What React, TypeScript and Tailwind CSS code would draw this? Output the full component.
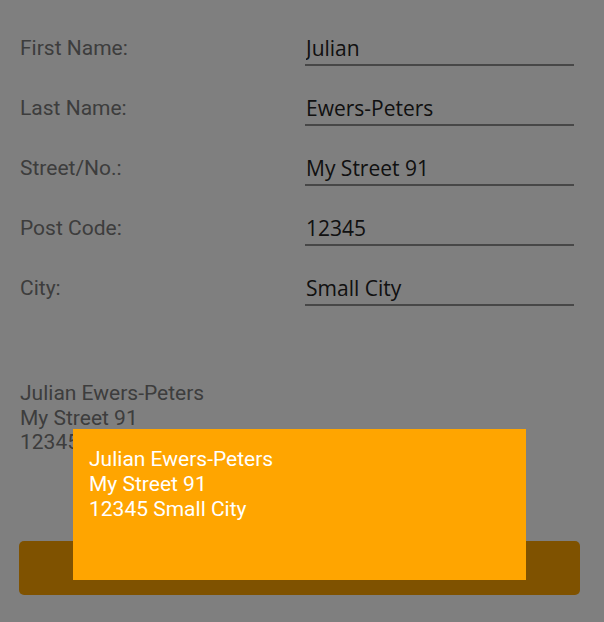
import React from "react";

const fields = [
  { label: "First Name:", value: "Julian" },
  { label: "Last Name:", value: "Ewers-Peters" },
  { label: "Street/No.:", value: "My Street 91" },
  { label: "Post Code:", value: "12345" },
  { label: "City:", value: "Small City" },
];

export default function App() {
  return (
    <div className="relative w-[604px] h-[622px] overflow-hidden bg-white font-['Roboto',sans-serif]">
      {/* Form */}
      <div className="flex flex-col gap-[20px] pt-[26px] pl-[20px] pr-[30px]">
        {fields.map((f) => (
          <div key={f.label} className="grid grid-cols-[285px_1fr] items-center h-[40px]">
            <span className="pt-[6px] text-[21px] text-[#7a7a7a]">{f.label}</span>
            <input
              readOnly
              value={f.value}
              className="h-[40px] w-full border-b-[2px] border-[#8e8e8e] bg-transparent pt-[5px] pl-[1px] text-[21px] text-[#222] outline-none font-['Open_Sans',sans-serif]"
            />
          </div>
        ))}
      </div>

      {/* Address preview */}
      <div className="mt-[75px] pl-[20px] text-[21px] leading-[24.5px] text-[#7a7a7a]">
        <div>Julian Ewers-Peters</div>
        <div>My Street 91</div>
        <div>12345 Small City</div>
      </div>

      <div className="pl-[19px] pr-[24px] mt-[86px]">
        <button className="h-[54px] w-full rounded-[5px] bg-[#ffa500]" />
      </div>

      {/* Overlay */}
      <div className="absolute inset-0 bg-black/50" />

      {/* Popup */}
      <div className="absolute left-[73px] top-[429px] w-[453px] h-[151px] bg-[#ffa500] px-[16px] pt-[18px] text-[21px] leading-[25px] text-white">
        <div>Julian Ewers-Peters</div>
        <div>My Street 91</div>
        <div>12345 Small City</div>
      </div>
    </div>
  );
}
